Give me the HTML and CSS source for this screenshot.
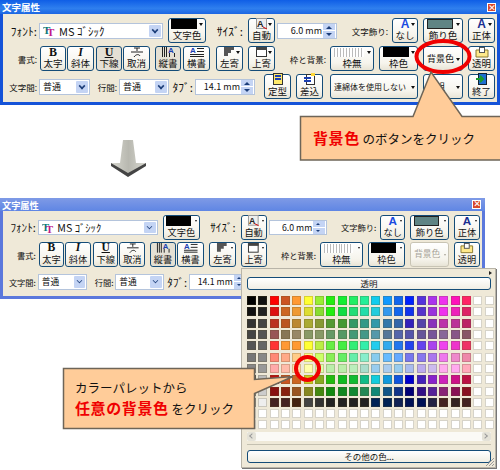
FILE: index.html
```html
<!DOCTYPE html>
<html lang="ja">
<head>
    <meta charset="UTF-8">
    <title>文字属性</title>
    <link rel="stylesheet" href="styles.css">
</head>
<body>
<div class="stage">

    <!-- before -->
    <div class="win win-top">
        <div class="title"><span>文字属性</span><b class="close">×</b></div>
        <div class="pane">
            <div class="row">
                <span class="lbl hw w37">ﾌｫﾝﾄ:</span>
                <div class="combo w124 m2"><svg class="tt" width="13" height="13"><text x="0" y="10" class="tt-a">T</text><text x="4" y="12" class="tt-b">T</text></svg><span class="latin">MS ｺﾞｼｯｸ</span><i class="drop"></i></div>
                <div class="btn w38 m5 drp"><i class="sw sw-black"></i><span>文字色</span></div>
                <span class="lbl hw w37">ｻｲｽﾞ:</span>
                <div class="btn w27 m5 drp"><svg class="ico" width="14" height="12"><rect x="1.500" y="0.500" width="10" height="10" fill="#eee" stroke="#999"/><text x="2" y="9" class="ic-a">A</text><path d="M8 9l4 2" stroke="#d00"/></svg><span>自動</span></div>
                <div class="spin w60 m2"><span>6.0 mm</span><i class="arrows"><u></u><u class="dn"></u></i></div>
                <span class="lbl w51">文字飾り:</span>
                <div class="btn w26 m4 drp"><em class="big-a">A</em><span>なし</span></div>
                <div class="btn w40 m5 drp"><i class="sw sw-teal"></i><span>飾り色</span></div>
                <div class="btn w27 m5 drp"><em class="big-a navy">A</em><span>正体</span></div>
            </div>
            <div class="row">
                <span class="lbl w37">書式:</span>
                <div class="btn w26 m3"><em class="face bold">B</em><span>太字</span></div>
                <div class="btn w27 m1"><em class="face ital">I</em><span>斜体</span></div>
                <div class="btn w26 m2 on"><em class="face under">U</em><span>下線</span></div>
                <div class="btn w27 m1"><svg class="ico" width="14" height="12"><path d="M1 6h12M7 2v3M4 2h6M4 11c2-3 5-3 6-1" stroke="#222" fill="none"/></svg><span>取消</span></div>
                <div class="btn w26 m5 on"><svg class="ico" width="16" height="12"><path d="M2.500 1v10M4.500 1v10M6.500 1v10M14.500 7v4M9.500 7v4" stroke="#222"/><text x="8" y="7" class="ic-b">A</text></svg><span>縦書</span></div>
                <div class="btn w27 m2"><svg class="ico" width="16" height="12"><text x="1" y="7" class="ic-b">A</text><path d="M8 2.500h7M8 5.500h7M1 8.500h14M1 10.500h14" stroke="#222"/></svg><span>横書</span></div>
                <div class="btn w27 m6 drp"><svg class="ico" width="14" height="12"><path d="M1 1h10v3h-3v3h-3v3H1z" fill="#555"/></svg><span>左寄</span></div>
                <div class="btn w27 m5 drp"><svg class="ico" width="14" height="12"><rect x="1.500" y="1.500" width="10" height="9" fill="#fff" stroke="#333"/><rect x="1" y="1" width="11" height="3" fill="#444"/></svg><span>上寄</span></div>
                <span class="lbl w51">枠と背景:</span>
                <div class="btn w44 m4 drp"><i class="dots"></i><span>枠無</span></div>
                <div class="btn w39 m5 drp"><i class="sw sw-black"></i><span>枠色</span></div>
                <div class="btn w40 m5 drp solo"><span>背景色</span></div>
                <div class="btn w27 m5"><svg class="ico" width="14" height="12"><path d="M1 11V4h12v7z" fill="#ffe98a" stroke="#8a7a30"/><rect x="4.500" y="1.500" width="5" height="5" fill="#fff" stroke="#555"/></svg><span>透明</span></div>
            </div>
            <div class="row">
                <span class="lbl w37">文字間:</span>
                <div class="combo w51 m2"><span>普通</span><i class="drop"></i></div>
                <span class="lbl w27">行間:</span>
                <div class="combo w50 m2"><span>普通</span><i class="drop"></i></div>
                <span class="lbl hw w24">ﾀﾌﾞ:</span>
                <div class="spin w60 m2"><span>14.1 mm</span><i class="arrows"><u></u><u class="dn"></u></i></div>
                <div class="btn w27 m9"><svg class="ico" width="14" height="13"><rect x="2.500" y="0.500" width="9" height="11" fill="#ffe96a" stroke="#333"/><path d="M4 3h6M4 6h6" stroke="#1c3fb0" stroke-width="2"/></svg><span>定型</span></div>
                <div class="btn w27 m5"><svg class="ico" width="14" height="13"><rect x="3.500" y="1.500" width="8" height="10" fill="#fff" stroke="#333"/><path d="M1 5h7M1 8h7" stroke="#1c3fb0" stroke-width="2"/><rect x="8" y="0" width="4" height="3" fill="#ffd83a"/></svg><span>差込</span></div>
                <div class="btn w88 m7 drp solo tight"><span>連綿体を使用しない</span></div>
                <div class="btn w40 m5 drp solo"><span>横組</span></div>
                <div class="btn w27 m5"><svg class="ico" width="14" height="13"><rect x="3.500" y="0.500" width="8" height="11" fill="#1d6fd0" stroke="#123"/><path d="M1 6h6M5 3l3 3-3 3" stroke="#1a9a2a" stroke-width="2" fill="none"/></svg><span>終了</span></div>
            </div>
        </div>
    </div>

    <svg class="shapes" width="500" height="470">
        <defs>
            <linearGradient id="shaft" x1="0" x2="1" y1="0" y2="0">
                <stop offset="0" stop-color="#d8d8d0"/>
                <stop offset="0.5" stop-color="#b8b8b0"/>
                <stop offset="1" stop-color="#d8d8d0"/>
            </linearGradient>
        </defs>
        <path d="M123 140h10l3 23h10l-18 11-17-11h9z" fill="url(#shaft)"/>
        <path d="M111 163l17 10 18-10v3l-18 11-17-11z" fill="#444"/>
    </svg>

    <!-- after -->
    <div class="win win-low">
        <div class="title"><span>文字属性</span><b class="close">×</b></div>
        <div class="pane">
            <div class="row">
                <span class="lbl hw w37">ﾌｫﾝﾄ:</span>
                <div class="combo w124 m2"><svg class="tt" width="13" height="13"><text x="0" y="10" class="tt-a">T</text><text x="4" y="12" class="tt-b">T</text></svg><span class="latin">MS ｺﾞｼｯｸ</span><i class="drop"></i></div>
                <div class="btn w38 m5 drp"><i class="sw sw-black"></i><span>文字色</span></div>
                <span class="lbl hw w37">ｻｲｽﾞ:</span>
                <div class="btn w27 m5 drp"><svg class="ico" width="14" height="12"><rect x="1.500" y="0.500" width="10" height="10" fill="#eee" stroke="#999"/><text x="2" y="9" class="ic-a">A</text><path d="M8 9l4 2" stroke="#d00"/></svg><span>自動</span></div>
                <div class="spin w60 m2"><span>6.0 mm</span><i class="arrows"><u></u><u class="dn"></u></i></div>
                <span class="lbl w51">文字飾り:</span>
                <div class="btn w26 m4 drp"><em class="big-a">A</em><span>なし</span></div>
                <div class="btn w40 m5 drp"><i class="sw sw-teal"></i><span>飾り色</span></div>
                <div class="btn w27 m5 drp"><em class="big-a navy">A</em><span>正体</span></div>
            </div>
            <div class="row">
                <span class="lbl w37">書式:</span>
                <div class="btn w26 m3"><em class="face bold">B</em><span>太字</span></div>
                <div class="btn w27 m1"><em class="face ital">I</em><span>斜体</span></div>
                <div class="btn w26 m2"><em class="face under">U</em><span>下線</span></div>
                <div class="btn w27 m1"><svg class="ico" width="14" height="12"><path d="M1 6h12M7 2v3M4 2h6M4 11c2-3 5-3 6-1" stroke="#222" fill="none"/></svg><span>取消</span></div>
                <div class="btn w26 m5 on"><svg class="ico" width="16" height="12"><path d="M2.500 1v10M4.500 1v10M6.500 1v10M14.500 7v4M9.500 7v4" stroke="#222"/><text x="8" y="7" class="ic-b">A</text></svg><span>縦書</span></div>
                <div class="btn w27 m2"><svg class="ico" width="16" height="12"><text x="1" y="7" class="ic-b">A</text><path d="M8 2.500h7M8 5.500h7M1 8.500h14M1 10.500h14" stroke="#222"/></svg><span>横書</span></div>
                <div class="btn w27 m6 drp"><svg class="ico" width="14" height="12"><path d="M1 1h10v3h-3v3h-3v3H1z" fill="#555"/></svg><span>左寄</span></div>
                <div class="btn w27 m5 drp"><svg class="ico" width="14" height="12"><rect x="1.500" y="1.500" width="10" height="9" fill="#fff" stroke="#333"/><rect x="1" y="1" width="11" height="3" fill="#444"/></svg><span>上寄</span></div>
                <span class="lbl w51">枠と背景:</span>
                <div class="btn w44 m4 drp"><i class="dots"></i><span>枠無</span></div>
                <div class="btn w39 m5 drp"><i class="sw sw-black"></i><span>枠色</span></div>
                <div class="btn w40 m5 drp solo off"><span>背景色</span></div>
                <div class="btn w27 m5"><svg class="ico" width="14" height="12"><path d="M1 11V4h12v7z" fill="#ffe98a" stroke="#8a7a30"/><rect x="4.500" y="1.500" width="5" height="5" fill="#fff" stroke="#555"/></svg><span>透明</span></div>
            </div>
            <div class="row">
                <span class="lbl w37">文字間:</span>
                <div class="combo w51 m2"><span>普通</span><i class="drop"></i></div>
                <span class="lbl w27">行間:</span>
                <div class="combo w50 m2"><span>普通</span><i class="drop"></i></div>
                <span class="lbl hw w24">ﾀﾌﾞ:</span>
                <div class="spin w60 m2"><span>14.1 mm</span><i class="arrows"><u></u><u class="dn"></u></i></div>
            </div>
        </div>
    </div>

    <!-- colour palette popup -->
    <div class="palette">
        <i class="more"></i>
        <div class="wide">透明</div>
        <div class="swatches" id="swatches"></div>
        <div class="hscroll"><i class="sb sb-l"></i><i class="sb sb-r"></i></div>
        <div class="rule"></div>
        <div class="wide">その他の色...</div>
        <svg class="grip" width="11" height="11"><path d="M10 2L2 10M10 5L5 10M10 8L8 10" stroke="#999"/></svg>
    </div>

    <!-- callouts -->
    <svg class="shapes" width="500" height="470">
        <ellipse cx="443" cy="56.500" rx="26.500" ry="15.500" fill="none" stroke="#f00000" stroke-width="4"/>
        <path d="M300.500 160V116.500H413L431 72l31 44.500H501V160z" fill="#ffcc99" stroke="#6e6558" stroke-width="1.500"/>
        <circle cx="307.500" cy="368.500" r="11.500" fill="none" stroke="#f00000" stroke-width="4"/>
        <path d="M63.500 368.500H254.500V379.500L293 376.500 254.500 393.500V428.500H63.500z" fill="#ffcc99" stroke="#6e6558" stroke-width="1.500"/>
    </svg>
    <p class="note note-a"><strong>背景色</strong> のボタンをクリック</p>
    <p class="note note-b">カラーパレットから<br><strong>任意の背景色</strong> をクリック</p>

</div>
<script src="palette.js"></script>
</body>
</html>
```

FILE: styles.css
```css
body {
    margin: 0;
    background-color: #fff;
    font-family: "Noto Sans CJK JP", "Liberation Sans", sans-serif;
    color: #111;
}
.stage {
    position: relative;
    width: 500px;
    height: 470px;
    overflow: hidden;
}
.shapes {
    position: absolute;
    left: 0;
    top: 0;
}

/* toolbar window */
.win {
    position: absolute;
    left: 0;
    width: 500px;
    height: 105px;
    box-sizing: border-box;
    background-color: #1553d8;
    padding: 0 3px 3px;
    display: flex;
    flex-direction: column;
}
.win-top {
    top: 0;
}
.win-low {
    top: 204px;
    height: 104px;
    zoom: 0.97;
    background-color: #5b78dc;
}
.title {
    height: 14px;
    margin: 0 -3px;
    padding: 0 4px 0 2px;
    display: flex;
    align-items: center;
    justify-content: space-between;
    background: linear-gradient(#0f5ee6, #2f7fee 60%, #1c66e2);
    color: #fff;
    font-size: 9.500px;
    font-weight: bold;
}
.win-low .title {
    background: linear-gradient(#7f9ae6, #5f86e4);
}
.close {
    width: 7px;
    height: 7px;
    background-color: #d8482a;
    border: 1px solid #fff;
    font-size: 8px;
    line-height: 7px;
    text-align: center;
}
.pane {
    flex: 1;
    background-color: #efe9d8;
    display: flex;
    flex-direction: column;
    gap: 3px;
    padding: 4px 0 0;
}
.row {
    height: 25px;
    display: flex;
    align-items: center;
    margin-left: -3px;
}

/* label / fields */
.lbl {
    font-size: 8.500px;
    text-align: right;
    white-space: nowrap;
    flex: none;
}
.lbl.hw {
    font-size: 11.500px;
}
.combo, .spin {
    position: relative;
    height: 16px;
    box-sizing: border-box;
    flex: none;
    display: flex;
    align-items: center;
    padding-left: 3px;
    background-color: #fff;
    border: 1px solid #b4c4dc;
    font-size: 9px;
    white-space: nowrap;
}
.latin {
    margin-left: 3px;
    font-size: 11px;
}
.tt {
    flex: none;
}
.tt-a, .tt-b {
    font: bold 11px "Liberation Serif", serif;
}
.tt-a {
    fill: #0a7a78;
}
.tt-b {
    fill: #c01a8a;
}
.drop {
    position: absolute;
    right: 1px;
    top: 1px;
    bottom: 1px;
    width: 12px;
    background-color: #c4d4f4;
    border-radius: 1px;
}
.drop::after {
    content: "";
    position: absolute;
    left: 3px;
    top: 2px;
    width: 4px;
    height: 4px;
    border-right: 2px solid #1d3f7a;
    border-bottom: 2px solid #1d3f7a;
    transform: scale(0.8) rotate(45deg);
}
.spin {
    justify-content: flex-end;
    padding-right: 14px;
}
.arrows {
    position: absolute;
    right: 1px;
    top: 0;
    bottom: 0;
    width: 12px;
    display: flex;
    flex-direction: column;
    gap: 1px;
}
.arrows u {
    position: relative;
    flex: 1;
    background-color: #c4d4f4;
}
.arrows u::after {
    content: "";
    position: absolute;
    left: 3px;
    top: 2px;
    border: 3px solid transparent;
    border-bottom: 3px solid #1d3f7a;
    border-top: 0;
}
.arrows u.dn::after {
    border-top: 3px solid #1d3f7a;
    border-bottom: 0;
}

/* buttons */
.btn {
    position: relative;
    height: 25px;
    box-sizing: border-box;
    padding-bottom: 1px;
    flex: none;
    display: flex;
    flex-direction: column;
    align-items: center;
    justify-content: flex-end;
    background: linear-gradient(#fff, #f6f4ec 70%, #e8e4d6);
    border: 1px solid #144c78;
    border-radius: 3px;
    font-size: 9.500px;
    line-height: 11px;
    white-space: nowrap;
}
.btn.on {
    background: #e4e0d4;
}
.btn.solo {
    justify-content: center;
    align-items: flex-start;
    padding-left: 3px;
    font-size: 9px;
}
.btn.tight {
    font-size: 8px;
}
.btn.off {
    border-color: #c8c4b4;
    color: #a8a498;
}
.drp::after {
    content: "";
    position: absolute;
    right: 2px;
    top: 4px;
    border: 2px solid transparent;
    border-top: 3px solid #111;
    border-bottom: 0;
}
.solo.drp::after {
    top: 11px;
}
.off.drp::after {
    border-top-color: #a8a498;
}
.ico {
    flex: none;
}
.ic-a {
    font: bold 9px "Liberation Sans", sans-serif;
    fill: #222;
}
.ic-b {
    font: bold 8px "Liberation Sans", sans-serif;
    fill: #1c3fb0;
}
.big-a {
    font: bold 12px/12px "Liberation Sans", sans-serif;
    color: #1a4ae0;
}
.big-a.navy {
    color: #1a2f90;
}
.face {
    font: bold 12px/11px "Liberation Serif", serif;
}
.face.ital {
    font-style: italic;
}
.face.under {
    text-decoration: underline;
}
.sw {
    width: 26px;
    height: 10px;
    flex: none;
    margin: 0 6px 1px 0;
}
.sw-black {
    background-color: #000;
}
.sw-teal {
    background-color: #5f8484;
    border: 1px solid #222;
    box-sizing: border-box;
}
.dots {
    width: 30px;
    height: 9px;
    margin: 0 6px 1px 0;
    background: repeating-linear-gradient(90deg, #bbb 0 1px, #fff 1px 3px);
}

/* sizes and left margins */
.w24 { width: 24px; }
.w26 { width: 26px; }
.w27 { width: 27px; }
.w37 { width: 37px; }
.w38 { width: 38px; }
.w39 { width: 39px; }
.w40 { width: 40px; }
.w44 { width: 44px; }
.w50 { width: 50px; }
.w51 { width: 51px; }
.w60 { width: 60px; }
.w88 { width: 88px; }
.w124 { width: 124px; }
.m1 { margin-left: 1px; }
.m2 { margin-left: 2px; }
.m3 { margin-left: 3px; }
.m4 { margin-left: 4px; }
.m5 { margin-left: 5px; }
.m6 { margin-left: 6px; }
.m7 { margin-left: 7px; }
.m9 { margin-left: 9px; }

/* palette */
.palette {
    position: absolute;
    left: 241px;
    top: 268px;
    width: 255px;
    height: 200px;
    box-sizing: border-box;
    padding: 8px 4px 0 5px;
    background-color: #efe9d8;
    border: 1px solid #b8b4a8;
    box-shadow: 1px 1px 0 #777;
    display: flex;
    flex-direction: column;
}
.more {
    position: absolute;
    right: 3px;
    top: 2px;
    border: 2px solid transparent;
    border-left: 3px solid #222;
    border-right: 0;
}
.wide {
    height: 13px;
    flex: none;
    box-sizing: border-box;
    border: 1px solid #144c78;
    border-radius: 3px;
    background: linear-gradient(#fff, #f0eee4);
    font-size: 8.500px;
    line-height: 11px;
    text-align: center;
}
.swatches {
    display: grid;
    grid-template-columns: repeat(22, 11.320px);
    grid-auto-rows: 11.320px;
    margin-top: 6px;
    flex: none;
}
.swatch {
    width: 9px;
    height: 9px;
    box-sizing: border-box;
    border: 1px solid rgba(90, 80, 40, 0.25);
}
.hscroll {
    position: relative;
    height: 9px;
    flex: none;
    background-color: #fbfaf6;
}
.sb {
    position: absolute;
    top: 0;
    width: 9px;
    height: 9px;
    background-color: #e4e2d8;
    border-radius: 2px;
}
.sb::after {
    content: "";
    position: absolute;
    top: 2px;
    left: 3px;
    width: 3px;
    height: 3px;
    border-left: 1px solid #999;
    border-bottom: 1px solid #999;
    transform: rotate(45deg);
}
.sb-l {
    left: 0;
}
.sb-r {
    right: 0;
}
.sb-r::after {
    left: 1px;
    transform: rotate(225deg);
}
.rule {
    height: 1px;
    flex: none;
    margin: 3px 0 5px;
    background-color: #c4c0b0;
}
.grip {
    position: absolute;
    right: 0;
    bottom: 0;
}

/* callout texts */
.note {
    position: absolute;
    margin: 0;
    font-size: 12.500px;
    line-height: 20px;
    white-space: nowrap;
}
.note strong {
    color: #f00000;
    font-size: 15px;
    font-weight: bold;
    letter-spacing: 0.600px;
}
.note-a {
    left: 313px;
    top: 128px;
}
.note-b {
    left: 75px;
    top: 378px;
}
```

FILE: palette.js
```js
// 12 rows x 22 columns, two white columns are added per row
const W = "#ffffff";
const rows = [
    "000 111 f00 c52 f93 ff3 9e3 2e1 1e3 2e6 2e9 1ce 19f 16e 02f 53d a3e e3e f1b f26",
    "111 222 d11 c62 e93 dd3 8d3 2e1 1d4 2d7 2da 2cd 39e 16e 13e 53c 93d e3e e2b d26",
    "333 444 b32 b52 b83 aa3 893 593 493 396 398 39a 37a 36a 32b 54a 83b b3a b39 b26",
    "444 555 955 875 986 896 896 696 596 497 498 59a 579 56a 55a 659 759 869 858 856",
    "555 666 f33 f93 f93 ff3 be4 6e4 4e4 3e7 3ea 2ce 3ae 27e 24e 64e a4e e4e e3c e36",
    "777 888 f87 fa8 fc8 ff8 cf6 8e5 6e6 6ea 8ec 8ce 6bf 6af 77e 87e a7e e7e e8c e8a",
    "888 999 faa fba fda ffa dfa bea bea beb adc 9ce ace 9ce abe bae cbe fae fae fab",
    "555 bbb b11 c52 c62 cc2 8a2 2b1 1b2 1b3 1b8 1cd 19d 15d 00c 42b 82c c2b c18 b14",
    "888 ccc 811 821 952 882 481 181 182 183 285 187 158 138 007 318 529 827 815 812",
    "999 eee 422 422 421 444 333 222 222 222 222 025 025 125 015 015 224 422 322 422",
    "",
    ""
];

const box = document.getElementById("swatches");
rows.forEach(function (row) {
    const cols = row ? row.split(" ").map(c => "#" + c) : new Array(20).fill(W);
    cols.concat([W, W]).forEach(function (colour) {
        const cell = document.createElement("i");
        cell.className = "swatch";
        cell.style.backgroundColor = colour;
        box.appendChild(cell);
    });
});
```
